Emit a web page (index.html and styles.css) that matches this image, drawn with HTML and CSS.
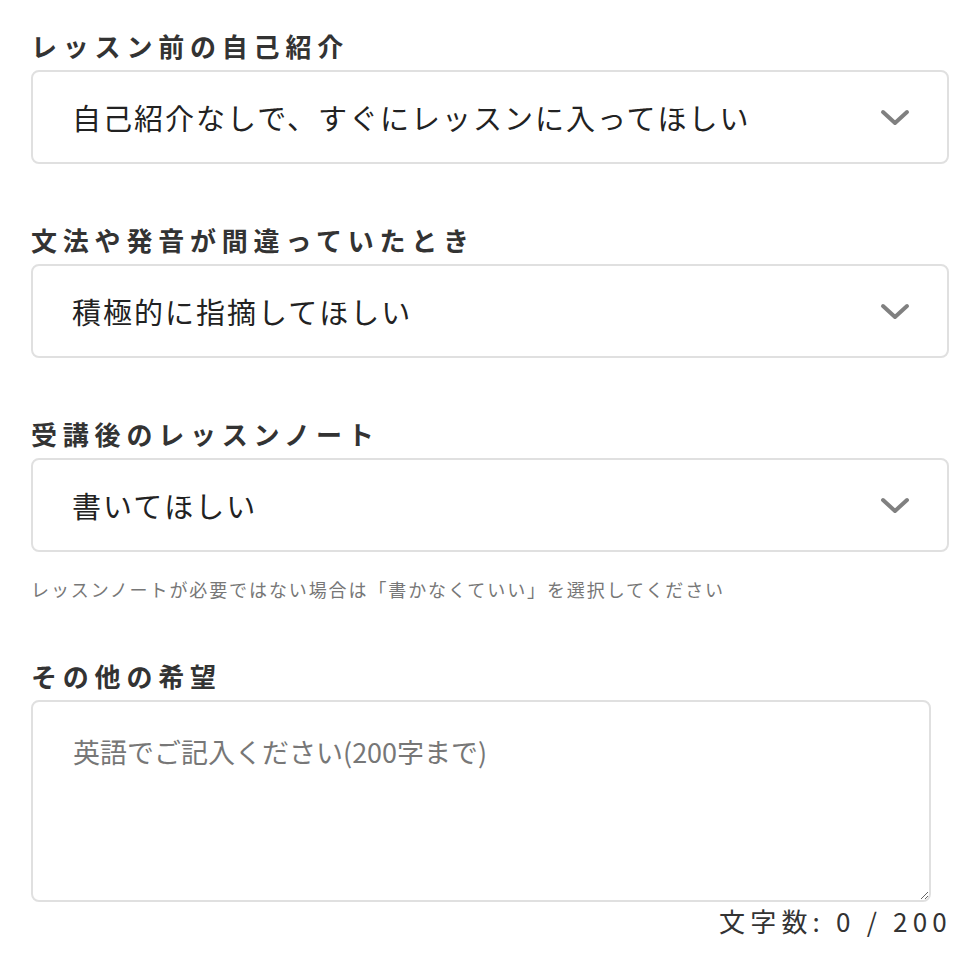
FILE: index.html
```html
<!DOCTYPE html>
<html lang="ja">
<head>
<meta charset="utf-8">
<link rel="stylesheet" href="styles.css">
</head>
<body>
<form class="form">
  <div class="field">
    <div class="label">レッスン前の自己紹介</div>
    <div class="select">
      <span class="select-text">自己紹介なしで、すぐにレッスンに入ってほしい</span>
      <svg class="chevron" width="30" height="22" viewBox="0 0 30 22"><polyline points="3,6 15,17 27,6" fill="none" stroke="#808080" stroke-width="4" stroke-linecap="round" stroke-linejoin="round"/></svg>
    </div>
  </div>
  <div class="field">
    <div class="label">文法や発音が間違っていたとき</div>
    <div class="select">
      <span class="select-text">積極的に指摘してほしい</span>
      <svg class="chevron" width="30" height="22" viewBox="0 0 30 22"><polyline points="3,6 15,17 27,6" fill="none" stroke="#808080" stroke-width="4" stroke-linecap="round" stroke-linejoin="round"/></svg>
    </div>
  </div>
  <div class="field">
    <div class="label">受講後のレッスンノート</div>
    <div class="select">
      <span class="select-text">書いてほしい</span>
      <svg class="chevron" width="30" height="22" viewBox="0 0 30 22"><polyline points="3,6 15,17 27,6" fill="none" stroke="#808080" stroke-width="4" stroke-linecap="round" stroke-linejoin="round"/></svg>
    </div>
    <p class="note">レッスンノートが必要ではない場合は「書かなくていい」を選択してください</p>
  </div>
  <div class="field field-last">
    <div class="label">その他の希望</div>
    <textarea class="textarea" placeholder="英語でご記入ください(200字まで)"></textarea>
    <div class="counter">文字数: 0 / 200</div>
  </div>
</form>
</body>
</html>
```
FILE: styles.css
```css
html, body {
  margin: 0;
  padding: 0;
  background: #ffffff;
}
body {
  font-family: "Noto Sans CJK JP", "Noto Sans", sans-serif;
  color: #222;
}
.form {
  width: 918px;
  padding: 26px 0 0 31px;
  display: flex;
  flex-direction: column;
}
.field {
  display: flex;
  flex-direction: column;
  margin-bottom: 56px;
}
.field-last {
  margin-bottom: 0;
}
.label {
  font-size: 26px;
  line-height: 39px;
  font-weight: 700;
  letter-spacing: 5.8px;
  color: #333;
  margin-bottom: 5px;
}
.select {
  box-sizing: border-box;
  height: 94px;
  border: 2px solid #e0e0e0;
  border-radius: 8px;
  display: flex;
  align-items: center;
  justify-content: space-between;
  padding: 0 37px 0 39px;
}
.select-text {
  font-size: 29px;
  letter-spacing: 2px;
  color: #222;
}
.chevron {
  display: block;
}
.note {
  margin: 24px 0 0;
  font-size: 18px;
  line-height: 27px;
  letter-spacing: 1.9px;
  color: #777;
  margin-bottom: -3px;
}
.textarea {
  box-sizing: border-box;
  width: 900px;
  height: 202px;
  border: 2px solid #e0e0e0;
  border-radius: 8px;
  padding: 30px 40px;
  font-family: "Noto Sans CJK JP", "Noto Sans", sans-serif;
  font-size: 27px;
  line-height: 40px;
  color: #222;
  resize: vertical;
  outline: none;
}
.textarea::placeholder {
  color: #777;
}
.counter {
  text-align: right;
  font-size: 26px;
  line-height: 36px;
  letter-spacing: 5.2px;
  color: #333;
  margin-top: 1px;
  margin-right: -3px;
}
```
